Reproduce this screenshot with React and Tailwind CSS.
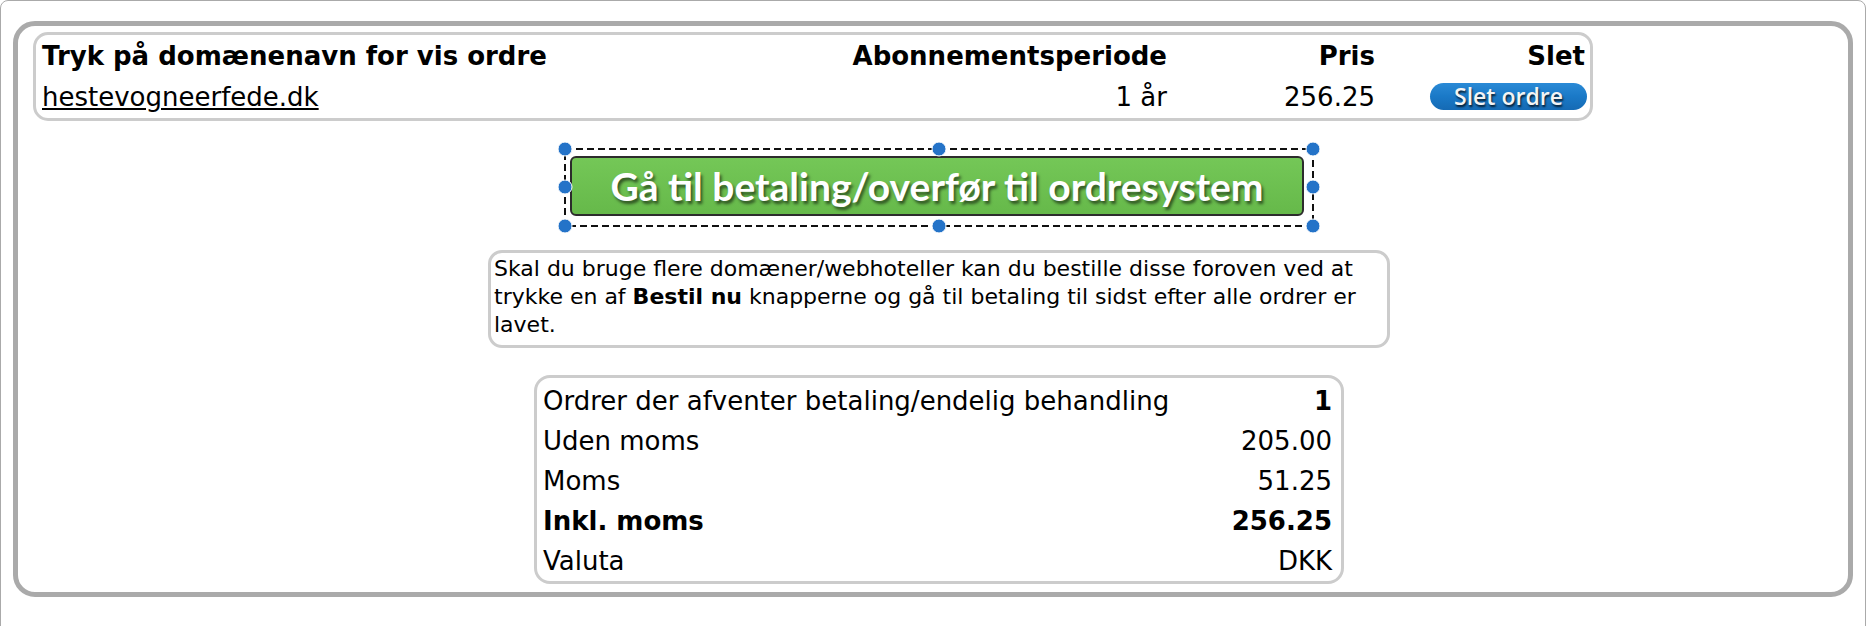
import React from "react";

const handles = [
  "left-[1px] top-[1px]",
  "left-[375px] top-[1px]",
  "left-[749px] top-[1px]",
  "left-[1px] top-[39px]",
  "left-[749px] top-[39px]",
  "left-[1px] top-[78px]",
  "left-[375px] top-[78px]",
  "left-[749px] top-[78px]",
];

function Handle({ pos }) {
  return (
    <span
      className={`absolute ${pos} w-[15px] h-[15px] -translate-x-1/2 -translate-y-1/2 rounded-full bg-[#2473c8] border border-white`}
    />
  );
}

export default function App() {
  return (
    <div className="w-[1866px] h-[626px] overflow-hidden bg-white font-['DejaVu_Sans','Verdana',sans-serif] text-black">
      <div className="h-[640px] border border-[#aaaaaa] rounded-[8px] pt-[20px] pl-[12px]">
        <div className="w-[1840px] h-[576px] border-[5px] border-[#aaaaaa] rounded-[22px] pt-[6px] pl-[15px]">
          {/* order table */}
          <div className="w-[1560px] h-[89px] border-[3px] border-[#cccccc] rounded-[15px] pl-[6px] pr-[5px] pt-[1px]">
            <div className="grid grid-cols-[1fr_330px_208px_210px] text-[26px]">
              <div className="h-[41px] leading-[41px] font-bold whitespace-nowrap">Tryk på domænenavn for vis ordre</div>
              <div className="h-[41px] leading-[41px] font-bold text-right">Abonnementsperiode</div>
              <div className="h-[41px] leading-[41px] font-bold text-right">Pris</div>
              <div className="h-[41px] leading-[41px] font-bold text-right">Slet</div>
              <div className="h-[41px] leading-[41px]">
                <a href="#" className="underline text-black">hestevogneerfede.dk</a>
              </div>
              <div className="h-[41px] leading-[41px] text-right">1 år</div>
              <div className="h-[41px] leading-[41px] text-right">256.25</div>
              <div className="h-[41px] flex items-center justify-end">
                <button className="w-[157px] h-[27px] -mr-[2px] -mt-[2px] rounded-full bg-gradient-to-b from-[#2a8ad6] via-[#1a79c7] to-[#156ab4] text-[#f4f4f4] font-['Open_Sans',sans-serif] font-semibold text-[23px] leading-[27px] [text-shadow:1px_2px_2px_rgba(0,0,0,0.75)]">
                  Slet ordre
                </button>
              </div>
            </div>
          </div>

          <div className="flex flex-col items-center pr-[3px]">
            {/* selected green button */}
            <div className="relative mt-[27px] w-[750px] h-[80px] pl-[6px] pt-[8px]">
              <svg className="absolute inset-0" width="750" height="80">
                <rect x="1" y="1" width="748" height="77" fill="none" stroke="#111" strokeWidth="2" strokeDasharray="7 4" />
              </svg>
              <div className="w-[734px] h-[60px] rounded-[6px] border-2 border-[#2c2c2c] bg-gradient-to-b from-[#74c757] to-[#66b94a] flex items-center justify-center text-white font-['Lato',sans-serif] font-bold text-[39px] [text-shadow:2px_3px_3px_rgba(0,0,0,0.55)]">
                Gå til betaling/overfør til ordresystem
              </div>
              {handles.map((h) => (
                <Handle key={h} pos={h} />
              ))}
            </div>

            {/* info box */}
            <div className="mt-[22px] w-[902px] h-[98px] border-[3px] border-[#cccccc] rounded-[14px] pl-[3px] pt-[2px] text-[22px] leading-[28px]">
              Skal du bruge flere domæner/webhoteller kan du bestille disse foroven ved at trykke en af <b>Bestil nu</b> knapperne og gå til betaling til sidst efter alle ordrer er lavet.
            </div>

            {/* summary */}
            <div className="mt-[27px] w-[810px] h-[209px] border-[3px] border-[#cccccc] rounded-[16px] pt-[3px] pl-[6px] pr-[9px] text-[26px]">
              <div className="h-[40px] flex items-center justify-between">
                <span>Ordrer der afventer betaling/endelig behandling</span>
                <b>1</b>
              </div>
              <div className="h-[40px] flex items-center justify-between">
                <span>Uden moms</span>
                <span>205.00</span>
              </div>
              <div className="h-[40px] flex items-center justify-between">
                <span>Moms</span>
                <span>51.25</span>
              </div>
              <div className="h-[40px] flex items-center justify-between font-bold">
                <span>Inkl. moms</span>
                <span>256.25</span>
              </div>
              <div className="h-[40px] flex items-center justify-between">
                <span>Valuta</span>
                <span>DKK</span>
              </div>
            </div>
          </div>
        </div>
      </div>
    </div>
  );
}
